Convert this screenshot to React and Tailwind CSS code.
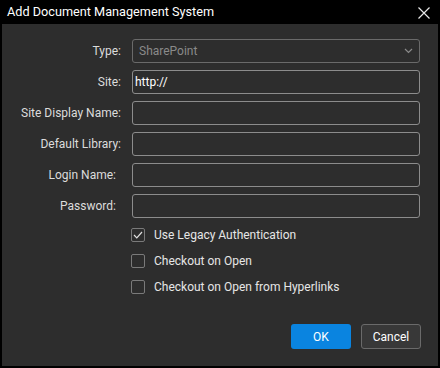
import React from "react";

const fields = [
    { label: "Site:", value: "http://" },
    { label: "Site Display Name:", value: "" },
    { label: "Default Library:", value: "" },
    { label: "Login Name:", value: "", shift: true },
    { label: "Password:", value: "", shift: true },
];

const options = [
    { label: "Use Legacy Authentication", checked: true },
    { label: "Checkout on Open", checked: false },
    { label: "Checkout on Open from Hyperlinks", checked: false },
];

const Row = ({ label, shift, children }) => (
    <div className="flex items-center h-[24px]">
        <div className={`w-[121px] text-right text-[12px] text-[#dcdcdc] ${shift ? 'pr-[7px]' : 'pr-[2px]'}`}>{label}</div>
        <div className="ml-[9px] w-[288px] h-[24px]">{children}</div>
    </div>
);

const App = () => {
    return (
        <div className="w-[440px] h-[368px] bg-black flex flex-col font-['Roboto',sans-serif]">
            <div className="h-[24px] flex items-center justify-between pl-[7px] pr-[9px]">
                <div className="text-[12.7px] text-white">Add Document Management System</div>
                <svg width="14" height="14" viewBox="0 0 14 14" className="mt-[1px]">
                    <path d="M1.5 1.5 L12.5 12.5 M12.5 1.5 L1.5 12.5" stroke="#e8e8e8" strokeWidth="1.2" />
                </svg>
            </div>
            <div className="mx-[2px] mb-[2px] flex-1 bg-[#2d2d2d] flex flex-col pt-[15px]">
                <div className="flex flex-col gap-[7px]">
                    <Row label="Type:">
                        <div className="h-full rounded-[3px] border border-[#6a6a6a] flex items-center justify-between pl-[6px] pr-[6px]">
                            <span className="text-[12px] text-[#8a8a8a]">SharePoint</span>
                            <svg width="9" height="6" viewBox="0 0 9 6">
                                <path d="M1 1 L4.5 4.5 L8 1" fill="none" stroke="#8a8a8a" strokeWidth="1.2" />
                            </svg>
                        </div>
                    </Row>
                    {fields.map((f) => (
                        <Row key={f.label} label={f.label} shift={f.shift}>
                            <div className="h-full rounded-[3px] border border-[#8c8c8c] flex items-center pl-[2px] text-[12px] text-white">
                                {f.value}
                            </div>
                        </Row>
                    ))}
                </div>
                <div className="flex flex-col gap-[12px] mt-[10px] pl-[129px]">
                    {options.map((o) => (
                        <div key={o.label} className="flex items-center h-[14px]">
                            <div className="w-[14px] h-[14px] rounded-[2px] border border-[#7a7a7a] flex items-center justify-center">
                                {o.checked && (
                                    <svg width="10" height="8" viewBox="0 0 10 8">
                                        <path d="M1 4 L3.8 6.8 L9 1" fill="none" stroke="#e0e0e0" strokeWidth="1.2" />
                                    </svg>
                                )}
                            </div>
                            <span className="ml-[9px] text-[12px] text-[#e6e6e6]">{o.label}</span>
                        </div>
                    ))}
                </div>
                <div className="flex justify-end gap-[10px] mt-auto mb-[17px] pr-[17px]">
                    <button className="w-[60px] h-[25px] rounded-[3px] bg-[#0a84e0] text-[12px] text-white">OK</button>
                    <button className="w-[60px] h-[25px] rounded-[3px] bg-[#383838] border border-[#6a6a6a] text-[12px] text-white">Cancel</button>
                </div>
            </div>
        </div>
    );
};

export default App;
